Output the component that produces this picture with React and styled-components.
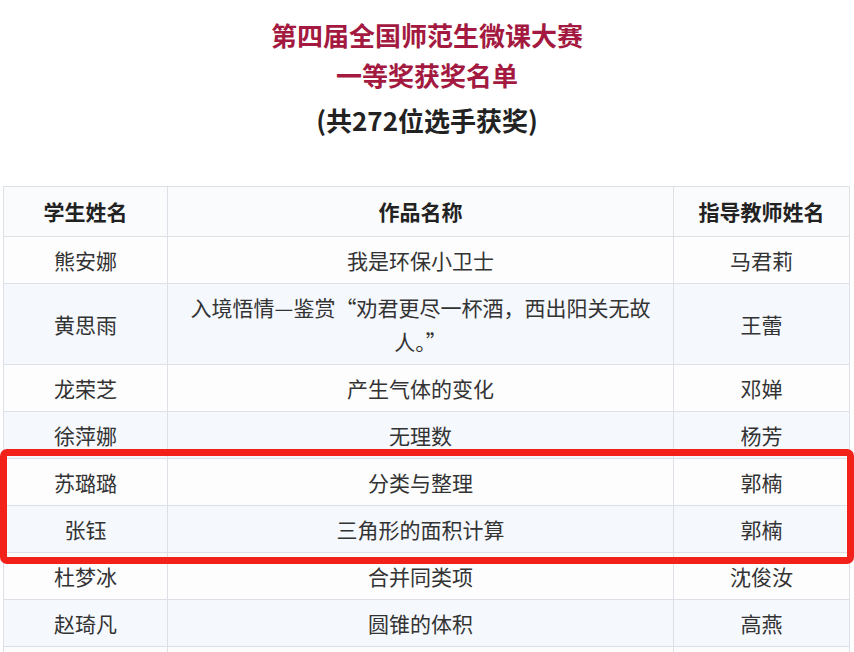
import React from 'react';
import styled, { createGlobalStyle } from 'styled-components';

const GlobalStyle = createGlobalStyle`
    body {
        margin: 0;
        background: #ffffff;
        font-family: "Noto Sans CJK SC", "Noto Sans", sans-serif;
    }
`;

const Page = styled.div`
    width: 854px;
    height: 652px;
    overflow: hidden;
`;

const Title = styled.h1`
    margin: 15px 0 0;
    text-align: center;
    font-size: 26px;
    line-height: 40px;
    font-weight: 700;
    color: #a3193f;
`;

const SubTitle = styled.h2`
    margin: 5px 0 0;
    text-align: center;
    font-size: 26px;
    line-height: 40px;
    font-weight: 700;
    color: #222222;
`;

const TableWrap = styled.div`
    position: relative;
    margin: 46px 5px 0 3px;
`;

const Table = styled.table`
    width: 846px;
    border-collapse: collapse;
    table-layout: fixed;
`;

const Head = styled.th`
    padding: 7px 6px;
    line-height: 35px;
    font-size: 21px;
    font-weight: 700;
    color: #222222;
    background: #fafbfc;
    border: 1px solid #dde0e6;
`;

const Row = styled.tr`
    background: ${(p) => (p.$alt ? '#f5f8fd' : '#fdfdfe')};
`;

const Cell = styled.td`
    padding: 6px 8px;
    line-height: 34px;
    font-size: 21px;
    color: #333333;
    text-align: center;
    border: 1px solid #dde0e6;
`;

const Highlight = styled.div`
    position: absolute;
    left: -3px;
    right: -5px;
    top: 263px;
    height: 115px;
    box-sizing: border-box;
    border: 7px solid #f2221b;
    border-radius: 7px;
    pointer-events: none;
`;

const rows = [
    ['熊安娜', '我是环保小卫士', '马君莉'],
    ['黄思雨', <>入境悟情—鉴赏“劝君更尽一杯酒，西出阳关无故<br />人。”</>, '王蕾'],
    ['龙荣芝', '产生气体的变化', '邓婵'],
    ['徐萍娜', '无理数', '杨芳'],
    ['苏璐璐', '分类与整理', '郭楠'],
    ['张钰', '三角形的面积计算', '郭楠'],
    ['杜梦冰', '合并同类项', '沈俊汝'],
    ['赵琦凡', '圆锥的体积', '高燕'],
    ['', '', ''],
];

export default function App() {
    return (
        <Page>
            <GlobalStyle />
            <Title>
                第四届全国师范生微课大赛
                <br />
                一等奖获奖名单
            </Title>
            <SubTitle>(共272位选手获奖)</SubTitle>
            <TableWrap>
                <Table>
                    <colgroup>
                        <col style={{ width: 164 }} />
                        <col style={{ width: 506 }} />
                        <col style={{ width: 176 }} />
                    </colgroup>
                    <thead>
                        <tr>
                            <Head>学生姓名</Head>
                            <Head>作品名称</Head>
                            <Head>指导教师姓名</Head>
                        </tr>
                    </thead>
                    <tbody>
                        {rows.map((r, i) => (
                            <Row key={i} $alt={i % 2 === 1}>
                                <Cell>{r[0]}</Cell>
                                <Cell>{r[1]}</Cell>
                                <Cell>{r[2]}</Cell>
                            </Row>
                        ))}
                    </tbody>
                </Table>
                {/* 红框标注 */}
                <Highlight />
            </TableWrap>
        </Page>
    );
}
